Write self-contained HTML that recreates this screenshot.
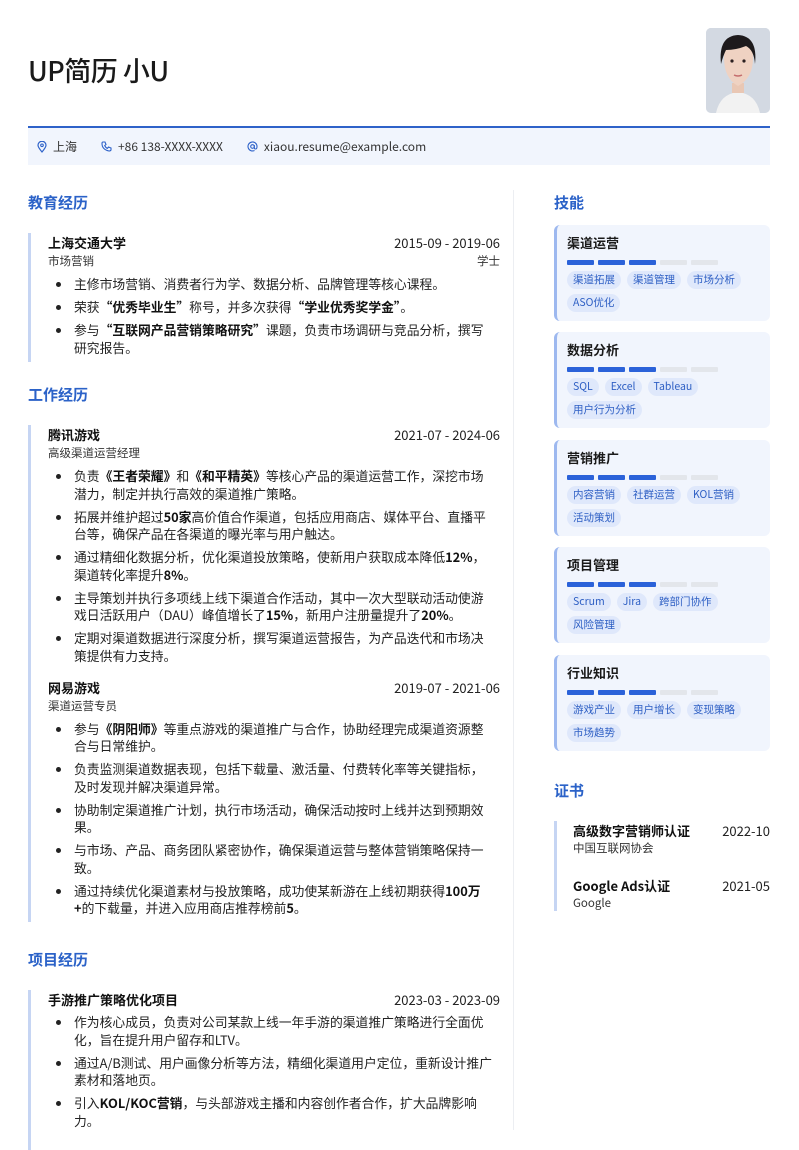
<!DOCTYPE html>
<html><head><meta charset="utf-8"><style>
*{margin:0;padding:0;box-sizing:border-box}
body{width:799px;height:1130px;background:#fff;font-family:"Noto Sans CJK SC","Liberation Sans",sans-serif;color:#222;position:relative;overflow:hidden}
.abs{position:absolute}
h1{position:absolute;left:28px;top:52px;font-size:27px;font-weight:500;color:#1a1a1a;letter-spacing:-0.5px;line-height:36px}
.photo{left:706px;top:28px;width:64px;height:85px;border-radius:5px;overflow:hidden;background:linear-gradient(#c9d1dd,#e6eaf0)}
.topline{left:28px;top:126px;width:742px;height:2px;background:#2e62c9}
.contact{left:28px;top:128px;width:742px;height:37px;background:#f1f5fd;font-size:12px;color:#333;display:flex;align-items:center;padding-left:9px}
.contact span{margin-right:24px;display:flex;align-items:center}
.contact svg{margin-right:6px}
.h2{position:absolute;font-size:15px;font-weight:700;color:#2b62c8;line-height:20px}
.divider{left:513px;top:190px;width:1px;height:940px;background:#eceef2}
.entry{position:absolute;left:28px;width:472px;border-left:3px solid #c6d5f3;padding-left:17px}
.row{display:flex;justify-content:space-between;font-size:13px;line-height:19px}
.row b{font-weight:700;color:#111}
.sub{font-size:11.5px;color:#333;line-height:19px;display:flex;justify-content:space-between}
ul{list-style:none;margin-top:4px}
li{position:relative;padding-left:26px;padding-right:6px;font-size:12.8px;line-height:17.5px;margin-bottom:5.5px;color:#222}
li:before{content:"";position:absolute;left:8px;top:7px;width:5px;height:5px;border-radius:50%;background:#222}
li b{font-weight:700;color:#111}
.card{position:absolute;left:554px;width:216px;background:#f1f5fd;border-left:3px solid #9db8ef;border-radius:6px;padding:8px 0 0 10px}
.card .t{font-size:13px;font-weight:700;color:#1a1a1a;line-height:20px}
.bars{display:flex;margin-top:7px}
.bars i{width:27px;height:5px;border-radius:1px;background:#2b62d9;margin-right:4px}
.bars i.e{background:#e3e6eb}
.tags{display:flex;flex-wrap:wrap;margin-top:6px;width:200px}
.tags span{font-size:10.5px;color:#2e5fc4;background:#dfe8fb;border-radius:9px;padding:0 6px;height:18px;line-height:18px;margin:0 6px 5px 0}
.cert{position:absolute;left:554px;width:216px;border-left:3px solid #c6d5f3;padding-left:16px}
.cert .row{font-size:13px}
.cert .s{font-size:11.5px;color:#333;line-height:17px}
</style></head><body>
<h1>UP简历 小U</h1>
<div class="abs photo"><svg width="64" height="85" viewBox="0 0 64 85">
<rect width="64" height="85" fill="#d3d9e2"/>
<path d="M10 85 Q14 66 32 64 Q50 66 54 85Z" fill="#f2f2f2"/>
<path d="M26 55 h12 v10 h-12z" fill="#e9c7b4"/>
<path d="M18 30 Q18 10 32 10 Q47 10 47 30 Q47 50 32 58 Q18 50 18 30Z" fill="#efd2c2"/>
<path d="M15 36 Q12 8 32 7 Q52 8 49 36 Q48 22 40 18 Q30 22 20 22 Q17 28 15 36Z" fill="#1d1a1c"/>
<circle cx="26" cy="33" r="1.6" fill="#2a2020"/><circle cx="38" cy="33" r="1.6" fill="#2a2020"/>
<path d="M28 47 Q32 49 36 47" stroke="#c46d6d" stroke-width="1.5" fill="none"/>
</svg></div>
<div class="abs topline"></div>
<div class="abs contact">
<span><svg width="10" height="12" viewBox="0 0 10 12"><path d="M5 11 C2 7.5 1 6 1 4.3 A4 4 0 0 1 9 4.3 C9 6 8 7.5 5 11Z" fill="none" stroke="#2e62c9" stroke-width="1.2"/><circle cx="5" cy="4.3" r="1.3" fill="none" stroke="#2e62c9" stroke-width="1.1"/></svg>上海</span>
<span><svg width="11" height="11" viewBox="0 0 11 11"><path d="M2 1 L4 1 L5 3.5 L3.7 4.6 Q5 7 6.4 7.4 L7.5 6 L10 7 L10 9 Q9.5 10 8 10 Q1 8.5 1 2.5 Q1 1 2 1Z" fill="none" stroke="#2e62c9" stroke-width="1.1"/></svg>+86 138-XXXX-XXXX</span>
<span><svg width="11" height="11" viewBox="0 0 11 11"><circle cx="5.5" cy="5.5" r="1.8" fill="none" stroke="#2e62c9" stroke-width="1.1"/><path d="M7.3 4 V6.5 Q7.3 8 8.5 8 Q10 8 10 5.5 A4.5 4.5 0 1 0 7.5 9.5" fill="none" stroke="#2e62c9" stroke-width="1.1"/></svg>xiaou.resume@example.com</span>
</div>
<div class="abs divider"></div>

<div class="h2" style="left:28px;top:193px">教育经历</div>
<div class="entry" style="top:233px">
<div class="row"><b>上海交通大学</b><span>2015-09 - 2019-06</span></div>
<div class="sub"><span>市场营销</span><span>学士</span></div>
<ul>
<li>主修市场营销、消费者行为学、数据分析、品牌管理等核心课程。</li>
<li>荣获<b>“优秀毕业生”</b>称号，并多次获得<b>“学业优秀奖学金”</b>。</li>
<li>参与<b>“互联网产品营销策略研究”</b>课题，负责市场调研与竞品分析，撰写研究报告。</li>
</ul></div>

<div class="h2" style="left:28px;top:385px">工作经历</div>
<div class="entry" style="top:425px">
<div class="row"><b>腾讯游戏</b><span>2021-07 - 2024-06</span></div>
<div class="sub"><span>高级渠道运营经理</span></div>
<ul>
<li>负责<b>《王者荣耀》</b>和<b>《和平精英》</b>等核心产品的渠道运营工作，深挖市场潜力，制定并执行高效的渠道推广策略。</li>
<li>拓展并维护超过<b>50家</b>高价值合作渠道，包括应用商店、媒体平台、直播平台等，确保产品在各渠道的曝光率与用户触达。</li>
<li>通过精细化数据分析，优化渠道投放策略，使新用户获取成本降低<b>12%</b>，渠道转化率提升<b>8%</b>。</li>
<li>主导策划并执行多项线上线下渠道合作活动，其中一次大型联动活动使游戏日活跃用户（DAU）峰值增长了<b>15%</b>，新用户注册量提升了<b>20%</b>。</li>
<li>定期对渠道数据进行深度分析，撰写渠道运营报告，为产品迭代和市场决策提供有力支持。</li>
</ul>
<div style="height:8px"></div>
<div class="row"><b>网易游戏</b><span>2019-07 - 2021-06</span></div>
<div class="sub"><span>渠道运营专员</span></div>
<ul>
<li>参与<b>《阴阳师》</b>等重点游戏的渠道推广与合作，协助经理完成渠道资源整合与日常维护。</li>
<li>负责监测渠道数据表现，包括下载量、激活量、付费转化率等关键指标，及时发现并解决渠道异常。</li>
<li>协助制定渠道推广计划，执行市场活动，确保活动按时上线并达到预期效果。</li>
<li>与市场、产品、商务团队紧密协作，确保渠道运营与整体营销策略保持一致。</li>
<li>通过持续优化渠道素材与投放策略，成功使某新游在上线初期获得<b>100万+</b>的下载量，并进入应用商店推荐榜前<b>5</b>。</li>
</ul></div>

<div class="h2" style="left:28px;top:950px">项目经历</div>
<div class="entry" style="top:990px;height:160px">
<div class="row"><b>手游推广策略优化项目</b><span>2023-03 - 2023-09</span></div>
<ul>
<li>作为核心成员，负责对公司某款上线一年手游的渠道推广策略进行全面优化，旨在提升用户留存和LTV。</li>
<li>通过A/B测试、用户画像分析等方法，精细化渠道用户定位，重新设计推广素材和落地页。</li>
<li>引入<b>KOL/KOC营销</b>，与头部游戏主播和内容创作者合作，扩大品牌影响力。</li>
</ul></div>

<div class="h2" style="left:554px;top:193px">技能</div>
<div class="card" style="top:225px;height:96px"><div class="t">渠道运营</div><div class="bars"><i></i><i></i><i></i><i class="e"></i><i class="e"></i></div><div class="tags"><span>渠道拓展</span><span>渠道管理</span><span>市场分析</span><span>ASO优化</span></div></div>
<div class="card" style="top:332px;height:96px"><div class="t">数据分析</div><div class="bars"><i></i><i></i><i></i><i class="e"></i><i class="e"></i></div><div class="tags"><span>SQL</span><span>Excel</span><span>Tableau</span><span>用户行为分析</span></div></div>
<div class="card" style="top:440px;height:96px"><div class="t">营销推广</div><div class="bars"><i></i><i></i><i></i><i class="e"></i><i class="e"></i></div><div class="tags"><span>内容营销</span><span>社群运营</span><span>KOL营销</span><span>活动策划</span></div></div>
<div class="card" style="top:547px;height:96px"><div class="t">项目管理</div><div class="bars"><i></i><i></i><i></i><i class="e"></i><i class="e"></i></div><div class="tags"><span>Scrum</span><span>Jira</span><span>跨部门协作</span><span>风险管理</span></div></div>
<div class="card" style="top:655px;height:96px"><div class="t">行业知识</div><div class="bars"><i></i><i></i><i></i><i class="e"></i><i class="e"></i></div><div class="tags"><span>游戏产业</span><span>用户增长</span><span>变现策略</span><span>市场趋势</span></div></div>

<div class="h2" style="left:554px;top:781px">证书</div>
<div class="cert" style="top:821px;height:90px">
<div class="row"><b>高级数字营销师认证</b><span>2022-10</span></div>
<div class="s">中国互联网协会</div>
<div style="height:19px"></div>
<div class="row"><b>Google Ads认证</b><span>2021-05</span></div>
<div class="s">Google</div>
</div>
</body></html>
